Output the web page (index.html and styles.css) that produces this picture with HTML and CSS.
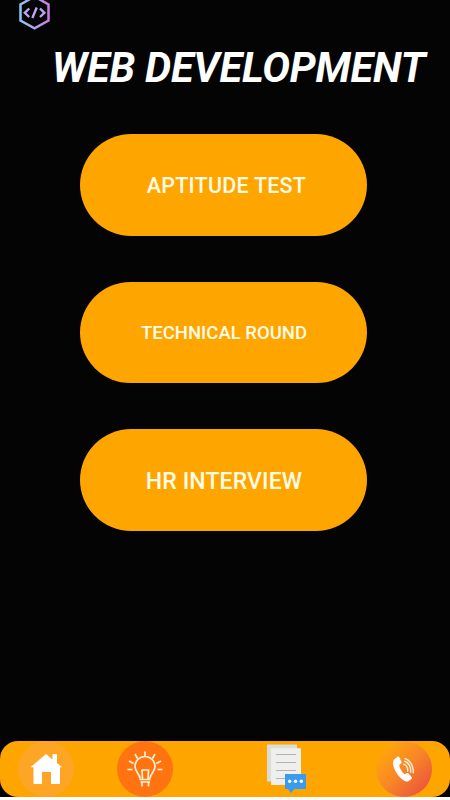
FILE: index.html
```html
<!DOCTYPE html>
<html lang="en">
<head>
<meta charset="utf-8">
<title>Web Development</title>
<link rel="stylesheet" href="styles.css">
</head>
<body>
<div class="screen">
  <header class="header">
    <svg class="logo" width="32" height="30" viewBox="0 0 32 30" fill="none">
      <defs><linearGradient id="logo-line" x1="1" y1="0" x2="31" y2="0" gradientUnits="userSpaceOnUse"><stop stop-color="#83cdf5"/><stop offset="1" stop-color="#d07ae6"/></linearGradient></defs>
      <path d="M16.500-3.500 30.500 4.500V20.500L16.500 28.300 2.500 20.500V4.500Z" stroke="url(#logo-line)" stroke-width="2.500"/>
      <path d="M11.200 8.500 6.800 12.800 11.200 17M22 8.500l4.400 4.300L22 17M18.700 7.500l-4.300 10.500" stroke="#bda5f2" stroke-width="2.400"/>
    </svg>
  </header>
  <h1 class="title">WEB DEVELOPMENT</h1>
  <main class="rounds">
    <button class="round aptitude"><span>APTITUDE TEST</span></button>
    <button class="round technical"><span>TECHNICAL ROUND</span></button>
    <button class="round interview"><span>HR INTERVIEW</span></button>
  </main>
  <nav class="tabs">
    <a class="tab home"><svg width="56" height="56" viewBox="0 0 56 56">
      <path fill="#fff" d="M12.500 26.200 28 13l6.500 5.400V13H39v9l5 4.200H42V43H33V31H24V43H15.500V26.200Z"/>
    </svg></a>
    <a class="tab ideas"><svg width="56" height="56" viewBox="0 0 56 56" fill="none" stroke="#fff3d5" stroke-width="1.700">
      <path d="M23 37.500c0-4.200-5-6.500-5-12a10 10 0 0 1 20 0c0 5.500-5 7.800-5 12M22.500 38.500h11M23.500 41h9.500M25.500 38 25 29h6.500L31 38M25 41v4.500M31.500 41v4.500"/>
      <path d="M28 10.500v5.500M18 13l2.500 4.500M38 13l-2.500 4.500M12 20l4.500 2.500M44 20l-4.500 2.500M10.500 28.500h5M40.500 28.500h5"/>
    </svg></a>
    <a class="tab notes"><svg width="56" height="56" viewBox="0 0 56 56">
      <path fill="#dcdcd8" d="M9 3.500h30v37H9Z"/>
      <path fill="#efefed" d="M13 7.300h30V44H13Z"/>
      <path stroke="#b3b3b3" stroke-width="1.200" d="M18 13.500h20M18 21.500h20M18 29.500h20M18 37.500h10"/>
      <path fill="#3b9bee" d="M27 33h21v15H36.500L33 52l-3-4h-3Z"/>
      <g fill="#fff"><circle cx="31.700" cy="40.300" r="1.700"/><circle cx="37.500" cy="40.300" r="1.700"/><circle cx="43.300" cy="40.300" r="1.700"/></g>
    </svg></a>
    <a class="tab call"><svg width="56" height="56" viewBox="0 0 56 56">
      <path fill="#fff" d="M18 18.500 21.500 15.800c.9-.5 1.600-.2 2 .7l2 4.200c.3.900.1 1.500-.7 2l-1.700 1.200c.8 3.800 2.700 7 5.500 9.300l1.900-1c.8-.4 1.500-.3 2.100.4l3 3.300c.6.800.5 1.500-.2 2.100l-3 2.300C25.500 42 13.500 24.500 18 18.500Z"/>
      <path fill="none" stroke="#fff3dc" stroke-width="1.400" stroke-linecap="round" d="M27.500 23.200c2.700 1 4.500 4 4.200 7.100M28.500 20.200c4.200 1.500 6.700 6 6.200 11M29 17.500c5.500 2 8.800 8 8.300 14.300"/>
    </svg></a>
  </nav>
</div>
</body>
</html>
```

FILE: styles.css
```css
* { box-sizing: border-box; }
body { margin: 0; background: #fff; font-family: Roboto, sans-serif; }
.screen {
  width: 450px;
  height: 797px;
  background: #040404;
  display: flex;
  flex-direction: column;
  overflow: hidden;
}
.header { height: 43px; padding-left: 18px; }
.logo { display: block; }
.title {
  margin: 0 0 0 52px;
  height: 50px;
  line-height: 50px;
  font-size: 41.5px;
  letter-spacing: -0.2px;
  font-weight: 700;
  font-style: italic;
  color: #fff;
  white-space: nowrap;
}
.rounds {
  margin: 41px 0 0 80px;
  width: 287px;
  display: grid;
  gap: 46px;
}
.round {
  height: 101.5px;
  padding: 2px 0 0 6px;
  border: 0;
  border-radius: 51px;
  background: #ffa500;
  color: #fffbe5;
  font-family: inherit;
  font-weight: 500;
  white-space: nowrap;
}
.aptitude { font-size: 21.5px; letter-spacing: 0.22px; }
.technical { font-size: 18.5px; padding: 1px 0 0 1px; }
.interview { font-size: 23px; letter-spacing: 0.13px; padding: 3px 0 0 1px; }
.tabs {
  margin-top: auto;
  height: 56px;
  padding: 0 18px;
  border-radius: 18px;
  background: #ffa500;
  display: flex;
}
.tab { width: 56px; height: 56px; border-radius: 50%; }
.tab svg { display: block; }
.home { background: #ffa526; }
.ideas { background: #ff7411; margin-left: 43px; }
.notes { margin-left: 85px; }
.call { background: linear-gradient(135deg, #ffab08 8%, #f98627 50%, #e94c40 95%); margin-left: auto; }
```
